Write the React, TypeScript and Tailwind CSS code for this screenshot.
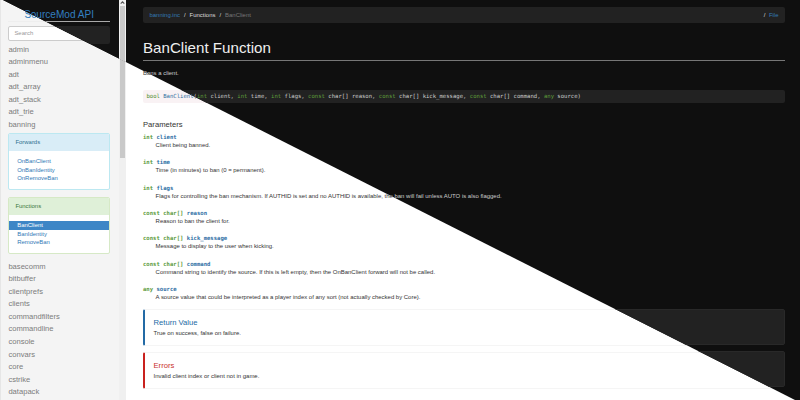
import type { ReactNode } from 'react'

type Tone = 'light' | 'dark'

const SANS = "font-['Liberation_Sans',Arial,sans-serif]"
const MONO = "font-['DejaVu_Sans_Mono',monospace]"

const before = ['admin', 'adminmenu', 'adt', 'adt_array', 'adt_stack', 'adt_trie', 'banning']
const after = [
  'basecomm', 'bitbuffer', 'clientprefs', 'clients', 'commandfilters', 'commandline',
  'console', 'convars', 'core', 'cstrike', 'datapack',
]

const params: [string, string, string][] = [
  ['int', 'client', 'Client being banned.'],
  ['int', 'time', 'Time (in minutes) to ban (0 = permanent).'],
  ['int', 'flags', ''],
  ['const char[]', 'reason', 'Reason to ban the client for.'],
  ['const char[]', 'kick_message', 'Message to display to the user when kicking.'],
  ['const char[]', 'command', 'Command string to identify the source. If this is left empty, then the OnBanClient forward will not be called.'],
  ['any', 'source', 'A source value that could be interpreted as a player index of any sort (not actually checked by Core).'],
]

const signature: [string, string][] = [
  ['int', ' client, '], ['int', ' time, '], ['int', ' flags, '], ['const', ' char[] reason, '],
  ['const', ' char[] kick_message, '], ['const', ' char[] command, '], ['any', ' source)'],
]

function ModuleList({ names }: { names: string[] }) {
  return (
    <ul className="text-[7.6px] text-[#7c7c7c]">
      {names.map((n) => (
        <li key={n} className="h-[12.56px] leading-[12.56px]">{n}</li>
      ))}
    </ul>
  )
}

function Panel({ title, items, frame, head, active }: {
  title: string; items: string[]; frame: string; head: string; active?: string
}) {
  return (
    <section className={`h-[57px] w-[102px] overflow-hidden rounded-[2px] border bg-white ${frame}`}>
      <h3 className={`h-[17px] pl-[6px] text-[5.95px] leading-[17px] ${head}`}>{title}</h3>
      <ul className="pt-[6px] text-[5.95px] text-[#3078b5]">
        {items.map((n) => (
          <li
            key={n}
            className={`h-[8.5px] pl-[7.8px] leading-[8.5px] ${n === active ? 'bg-[#3d86c6] text-white' : ''}`}
          >
            {n}
          </li>
        ))}
      </ul>
    </section>
  )
}

function Sidebar({ tone }: { tone: Tone }) {
  const dark = tone === 'dark'
  return (
    <aside className={`h-[400px] w-[119px] shrink-0 ${dark ? 'bg-[#111] pl-[8px]' : 'border-l border-[#e6e6e6] bg-[#f4f4f4] pl-[7.4px]'}`}>
      <div className={`h-[22px] w-[102px] border-b pt-[8px] text-center text-[10.07px] leading-[13px] text-[#337fc0] ${dark ? 'border-[#aaa]' : 'border-[#eee]'}`}>
        SourceMod API
      </div>
      <div className={`mt-[4px] w-[102px] rounded-[2px] text-[5.95px] text-[#999] ${dark ? 'h-[18px] bg-[#222]' : 'h-[15px] border border-[#ccc] bg-white pl-[5px] leading-[13px]'}`}>
        {!dark && 'Search'}
      </div>
      {!dark && (
        <>
          <div className="h-[92px] pt-[2.6px]"><ModuleList names={before} /></div>
          <Panel
            title="Forwards"
            items={['OnBanClient', 'OnBanIdentity', 'OnRemoveBan']}
            frame="border-[#bce8f1]"
            head="bg-[#d9edf7] text-[#31708f]"
          />
          <div className="h-[7px]" />
          <Panel
            title="Functions"
            items={['BanClient', 'BanIdentity', 'RemoveBan']}
            frame="border-[#d6e9c6]"
            head="bg-[#dff0d8] text-[#3c763d]"
            active="BanClient"
          />
          <div className="pt-[6.7px]"><ModuleList names={after} /></div>
        </>
      )}
    </aside>
  )
}

function Scrollbar() {
  return (
    <div className="h-[400px] w-[7px] shrink-0 bg-[#f0f0f0] px-px">
      <svg viewBox="0 0 5 6" className="h-[6px] w-[5px]">
        <path d="M.7 3.7 2.5 1.9 4.3 3.7" fill="none" stroke="#555" strokeWidth="1.1" />
      </svg>
      <div className="h-[152px] bg-[#c9c9c9]" />
    </div>
  )
}

function Callout({ tone, title, accent, children }: {
  tone: Tone; title: string; accent: string; children: ReactNode
}) {
  if (tone === 'dark') return <div className="mb-[6px] h-[36px] rounded-[2px] border border-[#292929] bg-[#222]" />
  return (
    <section className={`mb-[6px] h-[37px] rounded-[2px] border border-l-[2px] border-[#f5f5f5] pl-[8.5px] pt-[8px] ${accent}`}>
      <h4 className="text-[7.65px] leading-[10px]">{title}</h4>
      <p className="text-[5.97px] leading-[10px] text-[#333]">{children}</p>
    </section>
  )
}

function Layer({ tone }: { tone: Tone }) {
  const dark = tone === 'dark'
  return (
    <div className={`flex h-[400px] w-[800px] overflow-hidden ${SANS} ${dark ? 'bg-[#0f0f0f]' : 'bg-white'}`}>
      <Sidebar tone={tone} />
      <Scrollbar />
      <main className="w-[659px] shrink-0 pl-[17px] text-[5.96px]">
        <nav className={`mt-[7px] flex h-[16px] items-center justify-between rounded-[2px] px-[6.5px] ${dark ? 'bg-[#222] text-[#ddd]' : ''}`}>
          {dark && (
            <>
              <span className="whitespace-pre">
                <span className="text-[#337ab7]">banning.inc</span>
                <span className="px-[4px]">/</span>
                Functions
                <span className="px-[4px]">/</span>
                <span className="text-[#777]">BanClient</span>
              </span>
              <span>/<span className="pl-[3.4px] text-[#337ab7]">File</span></span>
            </>
          )}
        </nav>
        <h1 className={`mt-[15px] h-[23px] border-b text-[15.15px] leading-[20px] ${dark ? 'border-[#777] text-[#eee]' : 'border-[#eee]'}`}>
          {dark && 'BanClient Function'}
        </h1>
        <p className={`mt-[7px] h-[10px] leading-[10px] ${dark ? 'text-[#ccc]' : 'text-[#333]'}`}>Bans a client.</p>
        <div className={`mt-[12px] h-[13px] whitespace-pre rounded-[2px] pl-[3.4px] text-[5.6px] leading-[13px] ${MONO} ${dark ? 'bg-[#222] text-[#ccc]' : 'bg-[#f9f2f4] text-[#333]'}`}>
          <span className="text-[#4b8b27]">bool</span>
          <span className="text-[#30709f]"> BanClient</span>(
          {dark && signature.map(([type, rest], i) => (
            <span key={i}><span className="text-[#5f9f3a]">{type}</span>{rest}</span>
          ))}
        </div>
        <h3 className="mt-[15px] h-[13px] text-[7.65px] leading-[13px] text-[#333]">{!dark && 'Parameters'}</h3>
        <dl className="h-[178px] text-[#333]">
          {params.map(([type, name, text]) => (
            <div key={name} className="h-[25.35px]">
              <dt className={`h-[9px] whitespace-pre text-[5.6px] font-bold leading-[12px] ${MONO}`}>
                {!dark && (
                  <><span className="text-[#5b9a3c]">{type}</span> <span className="text-[#2c6da3]">{name}</span></>
                )}
              </dt>
              <dd className={`whitespace-nowrap pl-[12.6px] leading-[10px] ${dark ? 'text-[#ccc]' : ''}`}>
                {name === 'flags' ? (
                  <>
                    <span className={dark ? 'invisible' : ''}>Flags for controlling the ban mechanism. If AUTHID is set and no AUTHID is available, </span>
                    the ban will fail unless AUTO is also flagged.
                  </>
                ) : (!dark && text)}
              </dd>
            </div>
          ))}
        </dl>
        <Callout tone={tone} title="Return Value" accent="border-l-[#236aa5] text-[#236aa5]">
          True on success, false on failure.
        </Callout>
        <Callout tone={tone} title="Errors" accent="border-l-[#c9211e] text-[#c9302c]">
          Invalid client index or client not in game.
        </Callout>
      </main>
    </div>
  )
}

export default function App() {
  return (
    <div className="relative h-[400px] w-[800px] overflow-hidden">
      <Layer tone="light" />
      <div className="absolute inset-0 [clip-path:polygon(3px_0,800px_0,800px_400px,795px_400px)]">
        <Layer tone="dark" />
      </div>
    </div>
  )
}
